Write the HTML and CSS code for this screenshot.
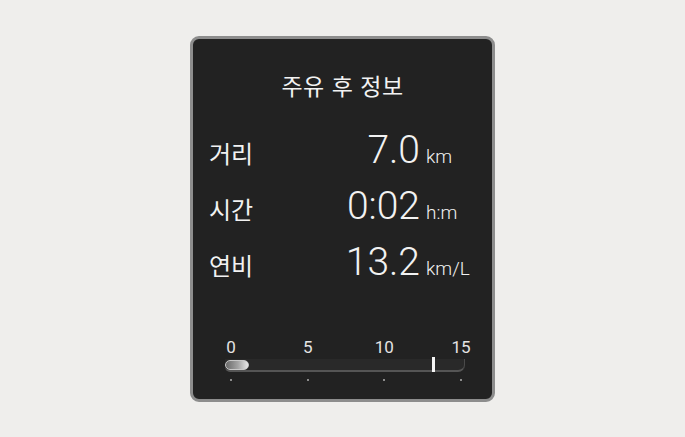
FILE: index.html
```html
<!DOCTYPE html>
<html lang="ko">
<head>
<meta charset="utf-8">
<link rel="stylesheet" href="styles.css">
</head>
<body>
<div class="panel">
  <div class="title">주유 후 정보</div>
  <div class="rows">
    <div class="row"><span class="label">거리</span><span class="value">7.0</span><span class="unit">km</span></div>
    <div class="row"><span class="label">시간</span><span class="value">0:02</span><span class="unit">h:m</span></div>
    <div class="row"><span class="label">연비</span><span class="value">13.2</span><span class="unit">km/L</span></div>
  </div>
  <div class="scale">
    <div class="scale-labels">
      <span class="tick-label"><span>0</span></span>
      <span class="tick-label"><span>5</span></span>
      <span class="tick-label"><span>10</span></span>
      <span class="tick-label"><span>15</span></span>
    </div>
    <div class="track">
      <div class="knob"></div>
      <div class="marker" style="left: 207px"></div>
    </div>
    <div class="dots">
      <span class="dot"></span><span class="dot"></span><span class="dot"></span><span class="dot"></span>
    </div>
  </div>
</div>
</body>
</html>
```

FILE: styles.css
```css
html, body {
  margin: 0;
  padding: 0;
}
body {
  background: #efeeec;
  width: 685px;
  height: 437px;
  padding: 36px 0 0 190px;
  box-sizing: border-box;
  font-family: "Noto Sans CJK KR", "Noto Sans", sans-serif;
  color: #f2f2f2;
}
.panel {
  width: 305px;
  height: 366px;
  box-sizing: border-box;
  border: 3px solid #8d8d8d;
  border-radius: 9px;
  background: #222222;
  display: flex;
  flex-direction: column;
  padding: 31px 0 18px 0;
}
.title {
  text-align: center;
  font-size: 23px;
  line-height: 30px;
  letter-spacing: 0.5px;
}
.rows {
  margin-top: 22px;
  padding: 0 12px 0 16px;
}
.row {
  display: grid;
  grid-template-columns: 1fr auto 54px;
  column-gap: 6px;
  align-items: baseline;
  height: 56px;
}
.label {
  font-size: 24px;
  line-height: 56px;
}
.value {
  font-family: Roboto, "Liberation Sans", sans-serif;
  font-weight: 300;
  font-size: 39px;
  line-height: 56px;
  text-align: right;
}
.unit {
  font-family: Roboto, "Liberation Sans", sans-serif;
  font-weight: 300;
  font-size: 19px;
  line-height: 56px;
}
.scale {
  margin-top: auto;
  margin-left: 32px;
  width: 240px;
}
.scale-labels {
  display: flex;
  justify-content: space-between;
  margin: 0 4px 0 6px;
  font-family: Roboto, "Liberation Sans", sans-serif;
  font-size: 17px;
  line-height: 20px;
  color: #e4e4e4;
}
.tick-label {
  width: 0;
  display: flex;
  justify-content: center;
}
.track {
  position: relative;
  margin-top: 2px;
  height: 13px;
  box-sizing: border-box;
  background: #292929;
  border-bottom: 2px solid #555555;
  border-right: 1px solid #4a4a4a;
  border-radius: 0 0 7px 5px;
  display: flex;
  align-items: center;
}
.knob {
  width: 24px;
  height: 10px;
  margin-top: 1px;
  box-sizing: border-box;
  border-radius: 5px;
  background: linear-gradient(to right, #6a6a6a, #a5a5a5 55%, #e8e8e8);
  border: 1px solid #c8c8c8;
}
.marker {
  position: absolute;
  top: -2px;
  width: 3px;
  height: 15px;
  background: #f4f4f4;
}
.dots {
  display: flex;
  justify-content: space-between;
  margin: 7px 3px 0 5px;
}
.dot {
  width: 2px;
  height: 2px;
  border-radius: 50%;
  background: #b0b0b0;
}
```
